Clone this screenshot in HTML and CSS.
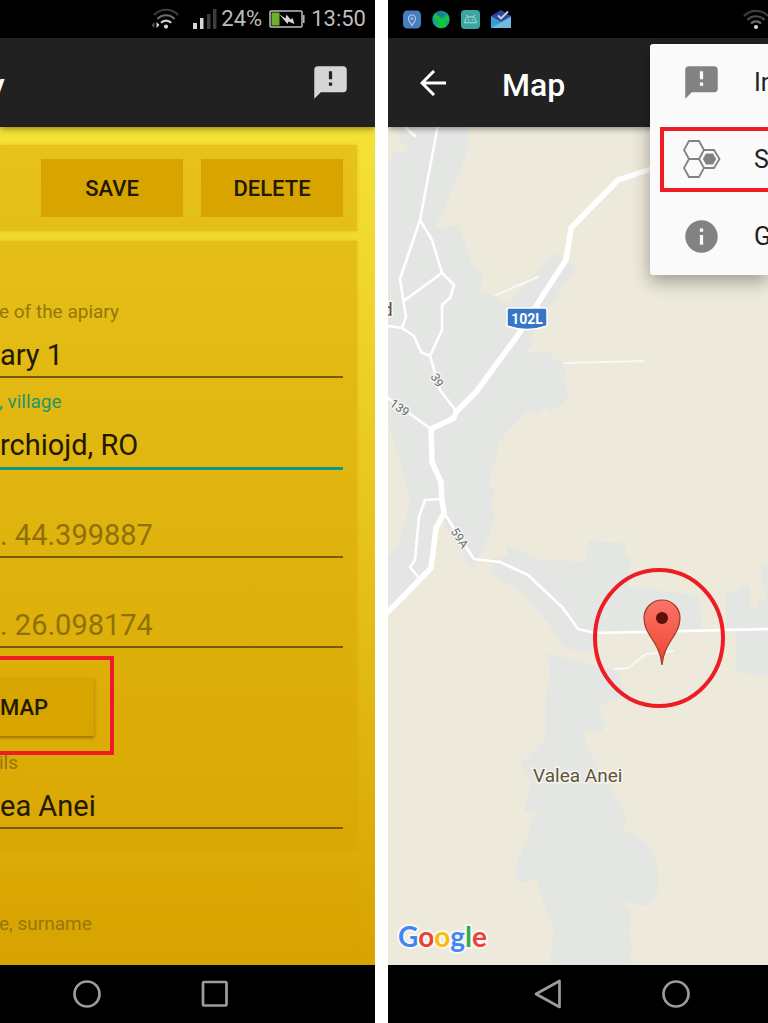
FILE: index.html
```html
<!DOCTYPE html>
<html lang="en">
<head>
<meta charset="utf-8">
<meta name="viewport" content="width=device-width, initial-scale=1">
<title>Apiary and Map</title>
<link rel="stylesheet" href="styles.css">
</head>
<body>
<main class="screens">

  <section class="phone phone-apiary">
    <div class="status status-end">
      <svg class="wifi" viewBox="0 0 30 22" width="30" height="22" fill="none">
        <path d="M4 7a16.500 16.500 0 0 1 24-.1" stroke="#3d3d3d" stroke-width="2.200"/>
        <path d="M7.500 11a11.500 11.500 0 0 1 17 0" stroke="#6d6d6d" stroke-width="2.200"/>
        <path d="M11 14.800a7 7 0 0 1 10.200 0" stroke="#d0d0d0" stroke-width="2.200"/>
        <circle cx="16" cy="18.600" r="2.100" fill="#d6d6d6"/>
        <path d="M6.500 14l3 3-3 3z" fill="#d6d6d6"/>
        <path d="M4.500 14l-3 3 3 3z" fill="#555"/>
      </svg>
      <svg class="signal" viewBox="0 0 24 20" width="24" height="20">
        <rect x="0" y="14" width="4" height="6" fill="#d6d6d6"/>
        <rect x="7" y="9" width="3.500" height="11" fill="#d6d6d6"/>
        <rect x="14" y="5" width="3.500" height="15" fill="#3d3d3d"/>
        <rect x="20" y="0" width="3.500" height="20" fill="#3d3d3d"/>
      </svg>
      <span>24%</span>
      <svg class="battery" viewBox="0 0 36 18" width="36" height="18">
        <rect x="1" y="1" width="32" height="16" rx="1" fill="none" stroke="#bdbdbd" stroke-width="1.500"/>
        <path d="M34.800 5v8" stroke="#bdbdbd" stroke-width="1.500"/>
        <rect x="2.500" y="2.500" width="8" height="13" fill="#6fae2b"/>
        <path d="M10 4l6.500 4.500 1-4 4 5 2-1.500 2 6-6-2.500-1 2.500z" fill="#d6d6d6"/>
      </svg>
      <span>13:50</span>
    </div>
    <header class="appbar">
      <h1 class="title">y</h1>
      <button class="icon-button" type="button" aria-label="Feedback">
        <svg viewBox="0 0 24 24" width="39" height="39" fill="#d6d6d6"><path d="M20 2H4c-1.100 0-1.990.9-1.990 2L2 22l4-4h14c1.100 0 2-.9 2-2V4c0-1.100-.9-2-2-2zm-7 12h-2v-2h2v2zm0-4h-2V5h2v5z"/></svg>
      </button>
    </header>
    <form class="form">
      <div class="card toolbar">
        <button class="action" type="button">SAVE</button>
        <button class="action" type="button">DELETE</button>
      </div>
      <div class="card details">
        <div class="field">
          <label for="apiary-name">e of the apiary</label>
          <input id="apiary-name" type="text" value="ary 1">
        </div>
        <div class="field field-active">
          <label for="village">, village</label>
          <input id="village" type="text" value="rchiojd, RO">
        </div>
        <div class="field">
          <input type="text" aria-label="Latitude" placeholder=". 44.399887">
        </div>
        <div class="field">
          <input type="text" aria-label="Longitude" placeholder=". 26.098174">
        </div>
        <div class="map-row">
          <button class="action raised" type="button">MAP</button>
          <div class="mark"></div>
        </div>
        <div class="field">
          <label for="more">ils</label>
          <input id="more" type="text" value="ea Anei">
        </div>
      </div>
      <div class="card owner">
        <div class="caption">e, surname</div>
      </div>
    </form>
    <nav class="navbar nav-end">
      <button class="icon-button" type="button" aria-label="Home"><svg viewBox="0 0 28 28" width="28" height="28" fill="none" stroke="#9c9c9c" stroke-width="2.700"><circle cx="14" cy="14" r="12.500"/></svg></button>
      <button class="icon-button" type="button" aria-label="Recent apps"><svg viewBox="0 0 28 28" width="28" height="28" fill="none" stroke="#9c9c9c" stroke-width="2.700"><rect x="2" y="2" width="23.500" height="23.500" rx="1"/></svg></button>
    </nav>
  </section>

  <section class="phone phone-map">
    <div class="status status-start">
      <svg viewBox="0 0 20 20" width="18" height="19"><rect width="20" height="20" rx="5" fill="#4a7dc0"/><path d="M10 16.500c-2.500-3.200-4-5.300-4-7.500a4 4 0 0 1 8 0c0 2.200-1.500 4.300-4 7.500z" fill="none" stroke="#b9cbe4" stroke-width="1.200"/><circle cx="10" cy="9" r="1.300" fill="#b9cbe4"/></svg>
      <svg viewBox="0 0 20 20" width="18" height="19"><circle cx="10" cy="10" r="9.700" fill="#16a0a0"/><path d="M1 7l3-3 7 6 7-5 1 6-5 1 2 6-6 1.500L4 16l5-2z" fill="#12c92e"/><path d="M4 3l5-2.500 7 3L11 8z" fill="#1d7f8d"/></svg>
      <svg viewBox="0 0 20 20" width="19" height="19"><rect width="20" height="20" rx="4" fill="#3aa5a2"/><path d="M4 13.500c0-6 3-6.500 6-6.500s6 .5 6 6.500zM5.500 5.500l2 2M14.500 5.500l-2 2" fill="none" stroke="#b5dad9" stroke-width="1.100"/><circle cx="7.800" cy="10.500" r=".8" fill="#b5dad9"/><circle cx="12.200" cy="10.500" r=".8" fill="#b5dad9"/></svg>
      <svg viewBox="0 0 20 19" width="20" height="19"><path d="M0 6L10 0l10 6v7H0z" fill="#2c47a0"/><path d="M0 6l10 6 10-6v12H0z" fill="#3a9bd0"/><path d="M0 18l20-11v11z" fill="#73b9dc"/><path d="M7 5.500l3 3L17 1.500" fill="none" stroke="#d2d2d2" stroke-width="1.800"/></svg>
      <svg class="wifi-edge" viewBox="0 0 28 22" width="28" height="22" fill="none">
        <path d="M2 8a16.500 16.500 0 0 1 24 0" stroke="#3d3d3d" stroke-width="2.200"/>
        <path d="M5.500 12a11.500 11.500 0 0 1 17 0" stroke="#4d4d4d" stroke-width="2.200"/>
        <path d="M9 15.500a7 7 0 0 1 10 0" stroke="#6a6a6a" stroke-width="2.200"/>
        <circle cx="14" cy="19" r="2.100" fill="#d6d6d6"/>
      </svg>
    </div>
    <header class="appbar appbar-map">
      <button class="icon-button" type="button" aria-label="Back">
        <svg viewBox="0 0 26 26" width="26" height="26" fill="none" stroke="#fff" stroke-width="3"><path d="M26 13H2M14 1L2 13l12 12"/></svg>
      </button>
      <h1 class="title">Map</h1>
    </header>
    <div class="map">
      <svg class="map-canvas" viewBox="0 0 380 838" preserveAspectRatio="xMinYMin slice" role="img" aria-label="Map of Valea Anei">
        <defs>
          <linearGradient id="pin" x1="0" y1="0" x2="0" y2="1"><stop offset="0" stop-color="#fb7466"/><stop offset="1" stop-color="#ee4431"/></linearGradient>
        </defs>
        <rect width="380" height="838" fill="#edeadb"/>
        <g fill="#e4e6e4">
          <path d="M14 0L9 10 23 24 5 25 0 38V296L12 335 22 376 10 420 0 430V484L43 443 48 401 56 386 57 400 80 436 87 442 93 426 103 403 107 386 102 383 107 363 101 360 103 345 109 333 110 316 127 296 140 283 150 288 160 278 162 286 182 270 175 253 179 253 175 235 166 233 163 226 135 225 143 220 146 203 188 140 165 126 119 178 110 170 92 165 95 146 81 136 83 133 73 106 68 98 53 101 48 100 60 73 70 50 80 23V0z"/>
          <path d="M117 418L153 433 198 435 200 414 237 416V430L243 431 239 460 255 461 310 469 314 493 312 503 207 506 203 526 177 521 160 496 133 465 102 446 104 433 120 428z"/>
          <path d="M338 465L350 463 352 459H362V481H369L370 473H378L373 446V439L380 438V549L347 545 348 526 347 505 338 503z"/>
          <path d="M158 526L213 540 228 543 237 563 228 576 222 572 209 583 217 596 214 605 197 602V616L208 636 223 663 240 693 233 700 258 716 Q268 728 270 745 Q272 779 255 779L237 774 232 779 240 780 243 796 241 806 245 822 240 824 243 830V838H165L162 826 167 803 157 780 149 753 130 756 127 740 142 706 143 691 153 683 136 685 143 656 133 636 157 613 158 570 162 545z"/>
        </g>
        <g fill="none" stroke="#fff" stroke-linejoin="round" stroke-linecap="round">
          <g stroke-width="2.600">
            <path d="M50-2L32 93 12 152 18 190 14 201M32 93L44 113 54 146 66 158 62 171 54 178V203L42 229M54 146L17 173M17 0L27 9"/>
            <path d="M0 199L14 201 26 209 33 225 42 229 52 263 68 284M0 271L43 302M53 372L37 373 31 390 27 433 22 440 31 451"/>
            <path d="M56 386L86 432 112 435 140 448 175 481 190 502 207 506 380 502"/>
          </g>
          <g stroke-width="2" stroke="#f8f8f5"><path d="M176 236L255 234M108 168L150 150M227 542L240 541 258 527 285 524"/></g>
          <path d="M380 10L320 26 263 42 230 53 183 101 178 133 157 165 130 208 88 265 68 285 66 291 43 302 44 335 53 355 54 373 56 386 48 401 43 441 0 485" stroke-width="5.500"/>
        </g>
        <path d="M121 181h36q2 0 2 2v16q-20 7-40 0v-16q0-2 2-2z" fill="#3775c6" stroke="#fff" stroke-width="1.500"/>
        <text class="road-number" x="139" y="197" text-anchor="middle">102L</text>
        <g class="road-label">
          <text x="-7" y="5" transform="translate(50 253) rotate(62)">39</text>
          <text x="-10" y="5" transform="translate(12 280) rotate(35)">139</text>
          <text x="-10" y="5" transform="translate(72 410) rotate(57)">59A</text>
        </g>
        <text class="place" x="-6" y="189">d</text>
        <text class="place" x="145" y="655">Valea Anei</text>
        <text class="logo" x="10" y="820"><tspan fill="#4285f4">G</tspan><tspan fill="#ea4335">o</tspan><tspan fill="#fbbc05">o</tspan><tspan fill="#4285f4">g</tspan><tspan fill="#34a853">l</tspan><tspan fill="#ea4335">e</tspan></text>
        <path d="M274 538C272 515 256 508 256 491a18 18 0 0 1 36 0c0 17-16 24-18 47z" fill="url(#pin)" stroke="#a5382c" stroke-width="1.200"/>
        <circle cx="274" cy="491" r="6" fill="#5a1109"/>
        <ellipse cx="271" cy="511" rx="64" ry="68" fill="none" stroke="#ee1c25" stroke-width="4"/>
      </svg>
    </div>
    <nav class="navbar nav-start">
      <button class="icon-button" type="button" aria-label="Back"><svg viewBox="0 0 28 30" width="28" height="30" fill="none" stroke="#9c9c9c" stroke-width="2.700" stroke-linejoin="round"><path d="M25.500 2v26L2 15z"/></svg></button>
      <button class="icon-button" type="button" aria-label="Home"><svg viewBox="0 0 28 28" width="28" height="28" fill="none" stroke="#9c9c9c" stroke-width="2.700"><circle cx="14" cy="14" r="12.500"/></svg></button>
    </nav>
    <div class="menu">
      <button class="menu-item" type="button">
        <svg viewBox="0 0 24 24" width="39" height="39" fill="#828282"><path d="M20 2H4c-1.100 0-1.990.9-1.990 2L2 22l4-4h14c1.100 0 2-.9 2-2V4c0-1.100-.9-2-2-2zm-7 12h-2v-2h2v2zm0-4h-2V5h2v5z"/></svg>
        <span>In</span>
      </button>
      <button class="menu-item menu-marked" type="button">
        <svg viewBox="0 0 39 39" width="39" height="39" fill="none" stroke="#828282" stroke-width="1.800"><path d="M7 1h10l5 9-5 9H7l-5-9zM7 19h10l5 9-5 9H7l-5-9zM22 10h10l5.500 9-5.500 9H22l-5-9z"/><path d="M24 13.500h7l3.200 5.500-3.200 5.500h-7L20.800 19z" fill="#828282" stroke="none"/></svg>
        <span>S</span>
      </button>
      <button class="menu-item" type="button">
        <svg viewBox="0 0 24 24" width="39" height="39" fill="#828282"><path d="M12 2C6.480 2 2 6.480 2 12s4.480 10 10 10 10-4.480 10-10S17.520 2 12 2zm1 15h-2v-6h2v6zm0-8h-2V7h2v2z"/></svg>
        <span>G</span>
      </button>
    </div>
  </section>

</main>
</body>
</html>
```
FILE: styles.css
```css
* { box-sizing: border-box; }

body {
  margin: 0;
  background: #fff;
  font-family: Roboto, "Liberation Sans", sans-serif;
}

button, input { font: inherit; border: 0; margin: 0; padding: 0; background: none; }
svg { display: block; flex: none; }

.screens { display: flex; gap: 13px; height: 100vh; }

.phone {
  position: relative;
  display: flex;
  flex-direction: column;
  min-width: 0;
  overflow: hidden;
}
.phone-apiary { flex: 375 1 0; }
.phone-map { flex: 380 1 0; }

.status {
  flex: none;
  display: flex;
  align-items: center;
  height: 38px;
  background: #000;
  color: #bdbdbd;
  font-size: 22px;
  line-height: 38px;
}
.status-end { justify-content: flex-end; padding-right: 9px; }
.signal { margin: 0 4px 0 13px; }
.battery { margin: 0 6px 0 7px; }
.status-start { gap: 11px; padding-left: 15px; }
.wifi-edge { margin-left: auto; margin-right: -2px; }

.appbar {
  position: relative;
  z-index: 1;
  flex: none;
  display: flex;
  align-items: center;
  justify-content: space-between;
  height: 89px;
  padding-right: 25px;
  background: #212121;
  box-shadow: 0 2px 6px rgba(0, 0, 0, .4);
}
.title { margin: 0; padding-top: 4px; color: #fff; font-size: 32px; font-weight: 500; line-height: 40px; }
.phone-apiary .title { margin-left: -11px; }
.appbar-map { justify-content: flex-start; gap: 56px; padding: 0 0 0 32px; }
.icon-button { display: block; flex: none; }

.form {
  flex: 1;
  min-height: 0;
  display: flex;
  flex-direction: column;
  gap: 10px;
  padding: 18px 18px 0 0;
  overflow: hidden;
  background: linear-gradient(#f5e236, #d8a300);
}
.card {
  flex: none;
  padding: 14px 14px 14px 0;
  background: rgba(216, 163, 0, .5);
  box-shadow: 0 0 3px rgba(216, 163, 0, .5);
}
.toolbar { display: flex; justify-content: flex-end; gap: 18px; }
.action {
  width: 142px;
  height: 58px;
  background: #d8a500;
  color: #211900;
  font-size: 22px;
  font-weight: 500;
}
.details { padding-top: 47px; padding-bottom: 20px; }
.field {
  display: flex;
  flex-direction: column;
  justify-content: flex-end;
  height: 90px;
}
.field label, .caption {
  margin-left: -1px;
  color: #967609;
  font-size: 19px;
  line-height: 24px;
}
.field input {
  width: 100%;
  height: 54px;
  padding-top: 9px;
  border-bottom: 2px solid #745a0a;
  border-radius: 0;
  color: #211900;
  font-size: 29px;
  outline: 0;
}
.field input::placeholder { color: #8f7006; opacity: 1; }
.field-active label { color: #239569; }
.field-active input { margin-bottom: -2px; height: 56px; border-bottom: 3px solid #0e9784; }

.map-row { position: relative; height: 91px; padding-top: 30px; }
.raised { width: 140px; margin-left: -46px; box-shadow: 0 2px 3px rgba(90, 60, 0, .5); }
.mark {
  position: absolute;
  top: 8px;
  left: -10px;
  width: 124px;
  height: 99px;
  border: 4px solid #ee1c25;
  pointer-events: none;
}
.owner { flex: 1; margin-top: 15px; padding-top: 38px; }

.map { flex: 1; min-height: 0; overflow: hidden; background: #edeadb; }
.map-canvas { width: 100%; height: 100%; }
.road-number { fill: #fff; font-size: 14px; font-weight: 700; }
.road-label text { fill: #6b6b6b; font-size: 12px; stroke: #f2f3f1; stroke-width: 3px; paint-order: stroke; }
.place { fill: #5f543c; font-size: 19px; stroke: #f6f5ee; stroke-width: 3px; paint-order: stroke; }
.logo { font-family: Lato, sans-serif; font-size: 28px; font-weight: 700; stroke: #f8f7f2; stroke-width: 4px; paint-order: stroke; }

.navbar { flex: none; display: flex; align-items: center; gap: 100px; height: 58px; background: #000; }
.nav-end { justify-content: flex-end; padding-right: 146px; }
.nav-start { padding-left: 146px; }

.menu {
  position: absolute;
  z-index: 2;
  top: 44px;
  right: 0;
  display: flex;
  flex-direction: column;
  width: 118px;
  padding-left: 10px;
  border-radius: 3px 0 0 3px;
  background: #fafafa;
  box-shadow: 0 6px 18px rgba(0, 0, 0, .35);
}
.menu-item {
  display: flex;
  align-items: center;
  gap: 33px;
  height: 77px;
  padding-left: 22px;
  color: #212121;
  font-size: 25px;
  text-align: left;
  white-space: nowrap;
}
.menu-marked {
  height: 65px;
  margin: 6px 0;
  padding-left: 18px;
  border: 4px solid #ee1c25;
  border-right: 0;
}
```
